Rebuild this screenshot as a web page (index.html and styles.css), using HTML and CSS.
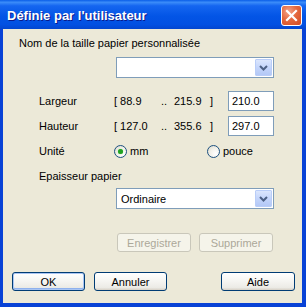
FILE: index.html
```
<!DOCTYPE html>
<html lang="fr">
<head>
    <meta charset="UTF-8">
    <title>Définie par l'utilisateur</title>
    <link rel="stylesheet" href="styles.css">
</head>
<body>
    <div class="window">
        <div class="titlebar">
            <span class="title">Définie par l'utilisateur</span>
            <span class="close-btn">
                <svg width="13" height="13" viewBox="0 0 13 13">
                    <path d="M2 2 L11 11 M11 2 L2 11" stroke="#fff" stroke-width="2.2" stroke-linecap="square"/>
                </svg>
            </span>
        </div>

        <div class="client">
            <div class="name-label">Nom de la taille papier personnalisée</div>
            <div class="combo combo-name">
                <span class="combo-text"></span>
                <span class="combo-btn">
                    <svg width="9" height="6" viewBox="0 0 9 6"><path d="M1 1 L4.5 4.5 L8 1" fill="none" stroke="#4d6185" stroke-width="2"/></svg>
                </span>
            </div>

            <div class="dim-row dim-first">
                <span class="dim-label">Largeur</span>
                <span class="rng-min">[ 88.9</span>
                <span class="rng-dots">..</span>
                <span class="rng-max">215.9</span>
                <span class="rng-end">]</span>
                <span class="field">210.0</span>
            </div>
            <div class="dim-row">
                <span class="dim-label">Hauteur</span>
                <span class="rng-min">[ 127.0</span>
                <span class="rng-dots">..</span>
                <span class="rng-max">355.6</span>
                <span class="rng-end">]</span>
                <span class="field">297.0</span>
            </div>

            <div class="unit-row">
                <span class="dim-label">Unité</span>
                <span class="radio-opt opt-mm"><span class="radio checked"></span>mm</span>
                <span class="radio-opt"><span class="radio"></span>pouce</span>
            </div>

            <div class="thick-label">Epaisseur papier</div>
            <div class="combo combo-thick">
                <span class="combo-text">Ordinaire</span>
                <span class="combo-btn">
                    <svg width="9" height="6" viewBox="0 0 9 6"><path d="M1 1 L4.5 4.5 L8 1" fill="none" stroke="#4d6185" stroke-width="2"/></svg>
                </span>
            </div>

            <div class="save-row">
                <span class="btn disabled">Enregistrer</span>
                <span class="btn disabled">Supprimer</span>
            </div>

            <div class="footer">
                <span class="btn default">OK</span>
                <span class="btn">Annuler</span>
                <span class="spacer"></span>
                <span class="btn btn-help">Aide</span>
            </div>
        </div>
    </div>
</body>
</html>
```

FILE: styles.css
```
* {
    margin: 0;
    padding: 0;
    box-sizing: border-box;
}

body {
    font-family: 'Liberation Sans', Arial, sans-serif;
    font-size: 11px;
    color: #000;
    background: #fff;
}

.window {
    width: 306px;
    height: 307px;
    background: #0842d6;
    display: flex;
    flex-direction: column;
}

.titlebar {
    height: 29px;
    display: flex;
    align-items: center;
    padding: 0 4px 0 7px;
    background: linear-gradient(180deg, #0a5ee8 0%, #3b8cf9 8%, #1566f0 20%, #0355e6 55%, #0250e2 85%, #0346cf 100%);
}

.title {
    flex: 1;
    color: #fff;
    font-weight: bold;
    font-size: 13px;
    text-shadow: 1px 1px #0a1a8a;
    padding-top: 1px;
}

.close-btn {
    width: 21px;
    height: 21px;
    border: 1px solid #fff;
    border-radius: 3px;
    background: radial-gradient(circle at 35% 30%, #f3a48b 0%, #e4693f 45%, #d34a22 100%);
    display: flex;
    align-items: center;
    justify-content: center;
    margin-top: 2px;
}

.client {
    flex: 1;
    margin: 0 4px 4px 3px;
    background: #ece9d8;
    padding: 8px 0 0 0;
}

.name-label {
    padding-left: 16px;
    line-height: 13px;
}

.combo {
    height: 21px;
    width: 158px;
    border: 1px solid #7f9db9;
    background: #fff;
    display: flex;
    align-items: center;
    padding: 1px;
}

.combo-name {
    margin: 7px 0 0 113px;
}

.combo-text {
    flex: 1;
    padding-left: 3px;
}

.combo-btn {
    width: 17px;
    height: 17px;
    border: 1px solid #b9cdf8;
    border-radius: 1px;
    background: linear-gradient(180deg, #dbe6fd 0%, #c4d5fb 50%, #b3c8f6 100%);
    display: flex;
    align-items: center;
    justify-content: center;
}

.dim-row {
    display: flex;
    align-items: center;
    height: 20px;
    margin-top: 5px;
}

.dim-first {
    margin-top: 13px;
}

.dim-label {
    width: 111px;
    padding-left: 36px;
}

.rng-min {
    width: 47px;
}

.rng-dots {
    width: 13px;
}

.rng-max {
    width: 36px;
}

.rng-end {
    width: 18px;
}

.field {
    width: 46px;
    height: 20px;
    border: 1px solid #7f9db9;
    background: #fff;
    padding: 0 3px;
    line-height: 18px;
}

.unit-row {
    display: flex;
    align-items: center;
    height: 16px;
    margin-top: 7px;
}

.radio-opt {
    display: flex;
    align-items: center;
    gap: 3px;
}

.opt-mm {
    width: 93px;
}

.radio {
    width: 13px;
    height: 13px;
    border: 1px solid #1c5180;
    border-radius: 50%;
    background: radial-gradient(circle at 70% 70%, #fff 0%, #f2f1ea 50%, #d7d4c6 100%);
    display: flex;
    align-items: center;
    justify-content: center;
}

.radio.checked::after {
    content: '';
    width: 5px;
    height: 5px;
    border-radius: 50%;
    background: #21a121;
    box-shadow: 0 0 1px #5ad55a;
}

.thick-label {
    margin-top: 11px;
    padding-left: 36px;
    line-height: 13px;
}

.combo-thick {
    margin: 5px 0 0 113px;
}

.save-row {
    display: flex;
    gap: 8px;
    margin: 24px 0 0 114px;
}

.btn {
    width: 73px;
    height: 19px;
    border: 1px solid #003c74;
    border-radius: 3px;
    background: linear-gradient(180deg, #fff 0%, #f7f7f4 40%, #ecebe6 85%, #d6d0c5 100%);
    display: flex;
    align-items: center;
    justify-content: center;
}

.btn.disabled {
    width: 74px;
    border-color: #c9c7ba;
    background: #f5f4ea;
    color: #aca899;
}

.btn.default {
    box-shadow: inset 0 0 0 1px #a9c5f3, inset 0 -1px 0 1px #8fb1ed;
}

.footer {
    display: flex;
    gap: 9px;
    margin: 20px 0 0 9px;
    padding-right: 7px;
}

.spacer {
    flex: 1;
}

.btn-help {
    width: 74px;
}
```
